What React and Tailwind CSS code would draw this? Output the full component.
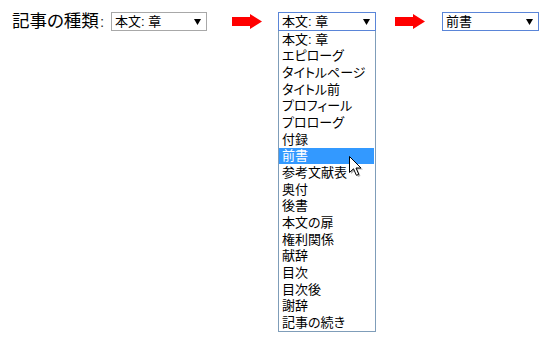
import React from "react";

const ITEMS = [
  "本文: 章",
  "エピローグ",
  "タイトルページ",
  "タイトル前",
  "プロフィール",
  "プロローグ",
  "付録",
  "前書",
  "参考文献表",
  "奥付",
  "後書",
  "本文の扉",
  "権利関係",
  "献辞",
  "目次",
  "目次後",
  "謝辞",
  "記事の続き",
];

// Liberation Sans first keeps the line boxes short; the kana/kanji come from Noto CJK
const font =
  "font-['Liberation_Sans','Noto_Sans_CJK_JP',sans-serif] [font-feature-settings:'palt']";

const Caret = () => (
  <svg width="7" height="6" viewBox="0 0 7 6" className="shrink-0">
    <path d="M0 0 H7 L3.5 6 Z" fill="#000" />
  </svg>
);

const RedArrow = () => (
  <svg width="30" height="15" viewBox="0 0 30 15" className="shrink-0">
    <path d="M0 3 H18 V0 L30 7.5 L18 15 V12 H0 Z" fill="#ff0000" />
  </svg>
);

const Select = ({ value, width, border, children }) => (
  <div className={`relative shrink-0 ${width}`}>
    <div
      className={`h-[19px] border ${border} bg-white flex items-center justify-between pl-[3px] pr-[5px] text-[13px] leading-none text-black`}
    >
      <span>{value}</span>
      <Caret />
    </div>
    {children}
  </div>
);

const Cursor = () => (
  <svg
    width="16"
    height="22"
    viewBox="0 0 16 22"
    className="absolute left-[349px] top-[156px]"
  >
    <path
      d="M2 2 L2 18 L6 14.5 L9 21 L11.5 20 L8.5 13.5 L14 13.5 Z"
      fill="#000"
      opacity="0.3"
    />
    <path
      d="M0.5 0.5 L0.5 16.5 L4.5 12.8 L7.4 19.3 L9.8 18.3 L7 12 L12 12 Z"
      fill="#fff"
      stroke="#000"
      strokeWidth="1"
    />
  </svg>
);

export default function App() {
  return (
    <div className={`relative w-[555px] h-[342px] bg-white overflow-hidden ${font}`}>
      <div className="flex items-center pt-[12px] pl-[12px]">
        <div className="w-[99px] shrink-0 flex items-center text-[17.5px] leading-none text-black">
          <span>記事の種類</span>
          <span className="text-[15px] text-[#333] ml-[1px]">:</span>
        </div>
        <Select value="本文: 章" width="w-[96px]" border="border-[#a8a8a8]" />
        <div className="ml-[25px]">
          <RedArrow />
        </div>
        <div className="ml-[16px]">
          <Select value="本文: 章" width="w-[98px]" border="border-[#5a85d8]">
            <div className="absolute left-0 top-full w-full h-[301px] border border-t-0 border-[#7f9db9] bg-white flex flex-col text-[13px] leading-none text-black">
              {ITEMS.map((item, i) => (
                <div
                  key={i}
                  className={`h-[16.66px] flex items-center pl-[3px] ${
                    i === 7 ? "bg-[#3399ff] text-white mr-[1px]" : ""
                  }`}
                >
                  {item}
                </div>
              ))}
            </div>
          </Select>
        </div>
        <div className="ml-[19px]">
          <RedArrow />
        </div>
        <div className="ml-[17px]">
          <Select value="前書" width="w-[97px]" border="border-[#5a85d8]" />
        </div>
      </div>
      <Cursor />
    </div>
  );
}
